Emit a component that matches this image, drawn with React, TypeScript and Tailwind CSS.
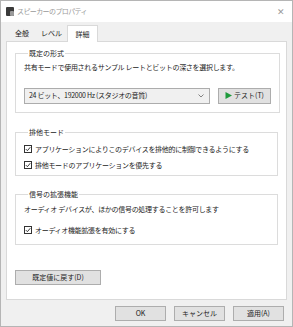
import React from 'react';

const font = { fontFamily: '"Noto Sans CJK JP", "Noto Sans", sans-serif' };

const Check: React.FC = () => (
  <span className="w-[8px] h-[8px] border border-[#333] bg-white flex items-center justify-center shrink-0">
    <svg width="6" height="6" viewBox="0 0 6 6">
      <path d="M0.8 3.1 L2.4 4.7 L5.3 1.2" fill="none" stroke="#222" strokeWidth="0.9" />
    </svg>
  </span>
);

const Btn: React.FC<{ label: string; className?: string }> = ({ label, className }) => (
  <div className={`h-[15px] bg-[#e1e1e1] border border-[#adadad] flex items-center justify-center text-[7px] text-[#222] ${className ?? ''}`}>
    {label}
  </div>
);

const Group: React.FC<{ title: string; className?: string; children: React.ReactNode }> = ({ title, className, children }) => (
  <fieldset className={`border border-[#dcdcdc] px-[8px] ${className ?? ''}`}>
    <legend className="ml-[4px] px-[1px] text-[7px] text-[#222] leading-[9px]">{title}</legend>
    {children}
  </fieldset>
);

export default function App() {
  return (
    <div className="w-[293px] h-[327px] border border-[#b5b5b5] bg-[#f0f0f0] flex flex-col text-[#222]" style={font}>
      <div className="h-[21px] bg-white flex items-center pl-[5px] pr-[7px] shrink-0">
        <div className="w-[8px] h-[9px] bg-[#3a3a3a] rounded-[1px] flex items-end justify-end mr-[3px]">
          <div className="w-[4px] h-[5px] bg-[#9a9a9a] rounded-[1px]" />
        </div>
        <span className="text-[7px] text-[#9a9a9a] tracking-[-0.6px]">スピーカーのプロパティ</span>
        <span className="ml-auto text-[9px] text-[#9a9a9a] leading-none">✕</span>
      </div>

      <div className="flex-1 flex flex-col px-[5px]">
        <div className="flex items-end h-[19px] pl-[2px]">
          <div className="w-[28px] h-[15px] flex items-center justify-center text-[7px]">全般</div>
          <div className="w-[31px] h-[15px] flex items-center justify-center text-[7px]">レベル</div>
          <div className="w-[31px] h-[17px] -mb-px flex items-center justify-center border border-b-0 border-[#d9d9d9] bg-white text-[7px] z-10 relative">詳細</div>
        </div>

        <div className="h-[259px] bg-white border border-[#d9d9d9] px-[8px] pt-[7px] flex flex-col">
          <Group title="既定の形式" className="h-[64px]">
            <div className="text-[7px] mt-[4px] tracking-[-0.3px]">共有モードで使用されるサンプル レートとビットの深さを選択します。</div>
            <div className="flex gap-[8px] mt-[15px]">
              <div className="w-[186px] h-[16px] bg-[#f0f0f0] border border-[#acacac] flex items-center pl-[4px] pr-[5px] text-[7px] tracking-[-0.3px]">
                24 ビット、192000 Hz (スタジオの音質)
                <svg className="ml-auto" width="6" height="4" viewBox="0 0 6 4">
                  <path d="M0.5 0.5 L3 3 L5.5 0.5" fill="none" stroke="#666" strokeWidth="0.8" />
                </svg>
              </div>
              <div className="w-[53px] h-[16px] bg-[#e1e1e1] border border-[#adadad] flex items-center justify-center gap-[2px] text-[7px]">
                <svg width="7" height="7" viewBox="0 0 7 7">
                  <path d="M0.5 0 L7 3.5 L0.5 7 Z" fill="#1e9a3c" />
                </svg>
                テスト(T)
              </div>
            </div>
          </Group>

          <Group title="排他モード" className="h-[48px] mt-[15px]">
            <div className="flex items-center gap-[3px] mt-[7px] text-[7px] tracking-[-0.3px]">
              <Check />
              アプリケーションによりこのデバイスを排他的に制御できるようにする
            </div>
            <div className="flex items-center gap-[3px] mt-[5px] text-[7px] tracking-[-0.3px]">
              <Check />
              排他モードのアプリケーションを優先する
            </div>
          </Group>

          <Group title="信号の拡張機能" className="h-[55px] mt-[14px]">
            <div className="text-[7px] mt-[5px] tracking-[-0.3px]">オーディオ デバイスが、ほかの信号の処理することを許可します</div>
            <div className="flex items-center gap-[3px] mt-[10px] text-[7px] tracking-[-0.3px]">
              <Check />
              オーディオ機能拡張を有効にする
            </div>
          </Group>

          <Btn label="既定値に戻す(D)" className="w-[86px] mt-[25px]" />
        </div>

        <div className="flex justify-end gap-[8px] pt-[6px] pr-[3px]">
          <Btn label="OK" className="w-[51px]" />
          <Btn label="キャンセル" className="w-[51px]" />
          <Btn label="適用(A)" className="w-[51px]" />
        </div>
      </div>
    </div>
  );
}
